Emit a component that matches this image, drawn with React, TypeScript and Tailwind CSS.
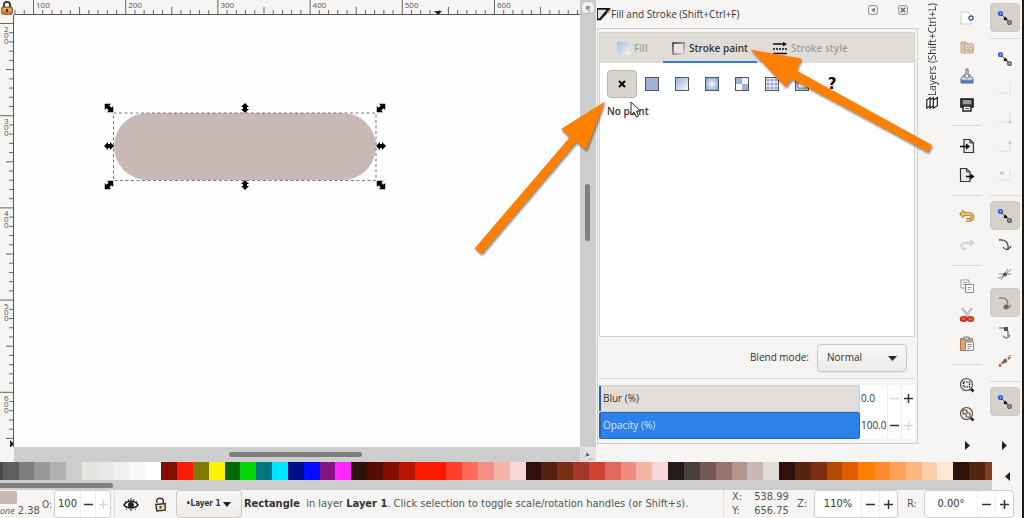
import type { ReactNode } from 'react'

const MINOR = 9.22

const swatches = [
  '#5f5f5f', '#7c7e80', '#989898', '#b0b0b0', '#cdcdcd', '#e6e5e2', '#e9e8e7', '#f1f0ef', '#f8f8f8', '#ffffff',
  '#850d00', '#f91c06', '#837908', '#fff200', '#006a00', '#06d70b', '#057782', '#00e5ff', '#000f85', '#000dff', '#851285', '#ff26ff',
  '#2e110a', '#560b06', '#850d00', '#b81303', '#f91a00', '#fb1a00', '#ff4029', '#ff6a5a', '#f58f85', '#f6b4aa', '#fad7da',
  '#2e110a', '#55200f', '#7c2e14', '#a6352b', '#d04332', '#e06a5e', '#f18d80', '#f4b5a5', '#fad7da',
  '#261c1d', '#4a3e3a', '#72584f', '#96736d', '#b0968f', '#c8b9b6', '#e0ddd8',
  '#2e110a', '#55260f', '#7f2d10', '#b34a00', '#e05f05', '#ff7f00', '#ff8a2a', '#ffa059', '#ffb580', '#ffceaa', '#ffe6d5',
  '#2e110a', '#55260f',
]

function Icon({ size = 16, children }: { size?: number; children: ReactNode }) {
  return (
    <svg width={size} height={size} viewBox="0 0 16 16" fill="none" aria-hidden className="shrink-0">
      {children}
    </svg>
  )
}

/* ---------- rulers and canvas ---------- */

function HorizontalRuler() {
  const ticks = Array.from({ length: 62 }, (_, i) => i - 2)
  return (
    <svg className="h-[15px] min-w-0 flex-1" aria-hidden>
      {ticks.map((i) => {
        const x = 19.5 + i * MINOR
        const top = i % 10 === 0 ? 0 : i % 5 === 0 ? 7 : 10
        return <line key={i} x1={x} x2={x} y1={top} y2={14} stroke="#666" />
      })}
      {[100, 200, 300, 400, 500, 600].map((n, k) => (
        <text key={n} x={22 + k * MINOR * 10} y={8} fill="#555" className="font-['Open_Sans',sans-serif] text-[8px]">
          {n}
        </text>
      ))}
      <path d="M420 11h8l-4 4z" fill="#222" />
      <line x1="0" x2="100%" y1="14.5" y2="14.5" stroke="#555" />
    </svg>
  )
}

function VerticalRuler() {
  const ticks = Array.from({ length: 47 }, (_, i) => i)
  return (
    <svg className="h-full w-[14px] shrink-0" aria-hidden>
      {ticks.map((i) => {
        const y = 8.5 + i * MINOR
        const left = i % 10 === 0 ? 0 : i % 5 === 0 ? 6 : 9
        return <line key={i} x1={left} x2={13} y1={y} y2={y} stroke="#666" />
      })}
      {[200, 300, 400, 500, 600].map((n, k) => (
        <text key={n} fill="#555" className="font-['Open_Sans',sans-serif] text-[8px]">
          {String(n).split('').map((c, j) => (
            <tspan key={j} x={4} y={17 + j * 6 + k * MINOR * 10}>{c}</tspan>
          ))}
        </text>
      ))}
      <path d="M10 425l4 4-4 4z" fill="#222" />
      <line x1="13.5" x2="13.5" y1="0" y2="100%" stroke="#555" />
    </svg>
  )
}

const handles = [
  [95, 93, 45], [231, 93, 90], [367, 93, -45],
  [95, 131, 0], [367, 131, 0],
  [95, 170, -45], [231, 170, 90], [367, 170, 45],
]

function Canvas() {
  return (
    <svg className="h-full min-w-0 flex-1 bg-[#fefefe]" role="img" aria-label="Rectangle">
      <rect x="100" y="98" width="262" height="67" rx="33.5" fill="#c8b9b6" />
      <rect x="99.5" y="98" width="262.5" height="67.5" stroke="#77778f" strokeDasharray="3 2.5" fill="none" />
      {handles.map(([x, y, r]) => (
        <path
          key={`${x}-${y}`}
          transform={`translate(${x} ${y}) rotate(${r})`}
          d={r % 90 === 0 ? 'M-5 0l4-4v2h2v-2l4 4-4 4v-2h-2v2z' : 'M-6 0l4.500-4.500v2.500h3v-2.500l4.500 4.500-4.500 4.500v-2.500h-3v2.500z'}
          fill="#000"
        />
      ))}
    </svg>
  )
}

function Editor() {
  return (
    <div className="flex min-w-0 flex-1">
      <div className="flex min-w-0 flex-1 flex-col">
        <div className="flex h-[15px] shrink-0">
          <button aria-label="Lock guides" className="flex w-[14px] shrink-0 items-end justify-center">
            <Icon size={14}>
              <path d="M4.500 7V4.500a3.500 3.500 0 0 1 7 0V7" stroke="#3a2b22" strokeWidth="2" />
              <rect x="2" y="7" width="12" height="8" rx="1" fill="#f0a637" stroke="#49331f" />
              <path d="M3 13h10" stroke="#dc6a35" strokeWidth="2" />
              <path d="M8 9v3.500" stroke="#3a1a10" strokeWidth="2" />
            </Icon>
          </button>
          <HorizontalRuler />
        </div>
        <div className="flex min-h-0 flex-1">
          <VerticalRuler />
          <Canvas />
        </div>
        <div className="ml-[14px] flex h-[15px] shrink-0 items-center bg-[#cdcdcd]">
          <div className="ml-[38%] h-[5px] w-[133px] rounded-full bg-[#7f7f7f]" />
        </div>
      </div>
      <div className="flex w-4 shrink-0 flex-col bg-[#cdcdcd]">
        <button aria-label="Page view" className="m-px flex h-[13px] items-center justify-center rounded-sm border border-[#bbb] bg-[#f1f0ee] font-['Open_Sans',sans-serif] text-[8px] text-[#777]">
          ¶
        </button>
        <div className="flex-1 pt-[169px]">
          <div className="ml-[5px] h-[57px] w-[5px] rounded-full bg-[#7f7f7f]" />
        </div>
        <button aria-label="Color managed view" className="flex h-[15px] items-center justify-center bg-[#e2e2e2]">
          <Icon size={14}>
            <path d="M2 1v13l12-1z" fill="#f5f2ec" stroke="#c5c5c5" />
            <path d="M3 6l4 3-4 5z" fill="#bcd6e8" />
            <path d="M6 5l4 3-4 2z" fill="#3e6171" />
            <path d="M9 10l4 3-6 1z" fill="#e8b7a5" />
          </Icon>
        </button>
      </div>
    </div>
  )
}

/* ---------- fill and stroke dialog ---------- */

function PaintSquare({ fill, children }: { fill: string; children?: ReactNode }) {
  return (
    <svg width="14" height="14" viewBox="0 0 14 14" aria-hidden>
      <rect x=".5" y=".5" width="13" height="13" fill={fill} stroke="#555" />
      {children}
    </svg>
  )
}

const paints: { name: string; icon: ReactNode }[] = [
  { name: 'Flat color', icon: <PaintSquare fill="#9bb2d4" /> },
  { name: 'Linear gradient', icon: <PaintSquare fill="url(#linear)" /> },
  { name: 'Radial gradient', icon: <PaintSquare fill="url(#radial)" /> },
  {
    name: 'Mesh gradient',
    icon: (
      <PaintSquare fill="#fff">
        <path d="M1 1h6v6H1zM7 7h6v6H7z" fill="#9bb2d4" />
        <path d="M7 1h6v6H7z" fill="#f1f4fa" />
      </PaintSquare>
    ),
  },
  {
    name: 'Pattern',
    icon: (
      <PaintSquare fill="#e8eef7">
        <circle cx="3" cy="3" r="1.6" fill="#8ea9d2" />
        <circle cx="7" cy="3" r="1.6" fill="#8ea9d2" />
        <circle cx="11" cy="3" r="1.6" fill="#8ea9d2" />
        <circle cx="3" cy="7" r="1.6" fill="#8ea9d2" />
        <circle cx="7" cy="7" r="1.6" fill="#8ea9d2" />
        <circle cx="11" cy="7" r="1.6" fill="#8ea9d2" />
        <circle cx="3" cy="11" r="1.6" fill="#8ea9d2" />
        <circle cx="7" cy="11" r="1.6" fill="#8ea9d2" />
        <circle cx="11" cy="11" r="1.6" fill="#8ea9d2" />
      </PaintSquare>
    ),
  },
  {
    name: 'Swatch',
    icon: (
      <PaintSquare fill="#b4c3dc">
        <path d="M3 1h9v10H3z" fill="#fff" stroke="#777" />
      </PaintSquare>
    ),
  },
]

function Dialog() {
  return (
    <section className="flex w-[322px] shrink-0 flex-col pl-px pb-[18px] text-[10px] text-[#333]">
      <header className="flex h-7 shrink-0 items-center">
        <Icon size={14}>
          <path d="M0 2h13L4 14H0z" fill="#e4e4e4" stroke="#111" strokeWidth="2" />
          <path d="M15 1L7 8l-5 6 6-3 7-8z" fill="#111" />
          <path d="M16 1l-5 5 2 1 3-4z" fill="#d98b4a" />
        </Icon>
        <h2>Fill and Stroke (Shift+Ctrl+F)</h2>
        <div className="mb-2 ml-auto mr-[10px] flex gap-[20px]">
          <button aria-label="Iconify">
            <Icon size={10}>
              <rect x="1" y="1" width="14" height="14" rx="2" stroke="#888" strokeWidth="1.500" />
              <path d="M11 4v8L5 8z" fill="#777" />
            </Icon>
          </button>
          <button aria-label="Close">
            <Icon size={10}>
              <rect x="1" y="1" width="14" height="14" rx="2" stroke="#888" strokeWidth="1.500" />
              <path d="M4.500 4.500l7 7m0-7l-7 7" stroke="#666" strokeWidth="2.500" />
            </Icon>
          </button>
        </div>
      </header>

      <div className="flex min-h-0 flex-1 flex-col border border-[#d2cec9] pt-[3px] pr-[2px] pb-1 pl-px">
        <div className="flex min-h-0 flex-1 flex-col border border-[#d5d1cd] bg-white">
          <div role="tablist" className="flex h-[30px] shrink-0 bg-[#e0ddd9] font-semibold text-[#a09d99]">
            <button role="tab" className="flex w-[63px] items-center gap-1 pl-[17px]">
              <svg width="13" height="13" aria-hidden><path d="M0 0h13v13H0z" fill="url(#linear)" opacity=".7" /></svg>
              Fill
            </button>
            <button role="tab" aria-selected className="flex w-[94px] items-center justify-center gap-1 whitespace-nowrap border-b-2 border-[#3b7dd0] pt-[2px] text-[#333]">
              <svg width="13" height="13" aria-hidden className="shrink-0">
                <rect x="1" y="1" width="11" height="11" fill="#e8e5e2" stroke="url(#edge)" strokeWidth="1.500" />
              </svg>
              Stroke paint
            </button>
            <button role="tab" className="flex items-center gap-1 whitespace-nowrap pl-[16px]">
              <svg width="14" height="13" aria-hidden>
                <path d="M0 2h11M0 11.500h14" stroke="#111" strokeWidth="1.500" />
                <path d="M10 0l4 2-4 2.500z" fill="#111" />
                <path d="M0 7h14" stroke="#111" strokeWidth="1.500" strokeDasharray="2 1" />
              </svg>
              Stroke style
            </button>
          </div>
          <div className="flex pt-[7px] pl-[7px]">
            <button aria-label="No paint" className="flex h-7 w-[30px] items-center justify-center rounded border border-[#b8b3ae] bg-[#d8d4d0]">
              <svg width="8" height="8" aria-hidden><path d="M1 1l6 6m0-6L1 7" stroke="#000" strokeWidth="2" /></svg>
            </button>
            {paints.map((p) => (
              <button key={p.name} aria-label={p.name} className="flex h-7 w-[30px] items-center justify-center">
                {p.icon}
              </button>
            ))}
            <button aria-label="Unset paint" className="h-7 w-[30px] font-['DejaVu_Sans',sans-serif] text-[15px] font-bold text-black">
              ?
            </button>
          </div>
          <p className="pt-[6px] pl-[7px] font-semibold">No paint</p>
        </div>

        <div className="flex h-[41px] shrink-0 items-center justify-end gap-2 pr-2">
          <label htmlFor="blend">Blend mode:</label>
          <div className="relative">
            <select id="blend" className="h-7 w-[90px] appearance-none rounded border border-[#cdc7c2] bg-linear-to-b from-[#f8f7f6] to-[#edebe9] pl-[9px] shadow-xs">
              <option>Normal</option>
            </select>
            <svg width="9" height="5" aria-hidden className="pointer-events-none absolute top-3 right-[10px]">
              <path d="M0 0h9L4.500 5z" fill="#2b2b2b" />
            </svg>
          </div>
        </div>
        <div className="mb-[6px] h-px shrink-0 bg-[#dcd9d5]" />
        <SliderRow id="blur" label="Blur (%)" value={0} text="0.0" />
        <SliderRow id="opacity" label="Opacity (%)" value={100} text="100.0" />
      </div>
    </section>
  )
}

function SliderRow({ id, label, value, text }: { id: string; label: string; value: number; text: string }) {
  const full = value === 100
  return (
    <div className="flex h-[27px] shrink-0">
      <div className="relative min-w-0 flex-1">
        <input
          id={id}
          type="range"
          defaultValue={value}
          className={`block h-full w-full appearance-none rounded-xs border border-l-2 border-l-[#1d62bd] [&::-webkit-slider-thumb]:w-0 [&::-webkit-slider-thumb]:appearance-none ${
            full ? 'border-[#2568bd] bg-[#2c82e8]' : 'border-[#d0ccc7] bg-[#e1deda]'
          }`}
        />
        <label htmlFor={id} className={`absolute inset-y-0 left-1 flex items-center ${full ? 'text-[#d3e7ff]' : ''}`}>
          {label}
        </label>
      </div>
      <input aria-label={`${label} value`} defaultValue={text} className="w-[27px] bg-white pl-px" />
      <button aria-label={`Decrease ${label}`} className="flex w-[14px] items-center justify-center border-l border-[#eee] bg-white">
        <Sign muted={!full} />
      </button>
      <button aria-label={`Increase ${label}`} className="flex w-[14px] items-center justify-center border-l border-[#eee] bg-white">
        <Sign plus muted={full} />
      </button>
    </div>
  )
}

function Sign({ plus, muted }: { plus?: boolean; muted?: boolean }) {
  return (
    <svg width="9" height="9" aria-hidden className="shrink-0">
      <path d={plus ? 'M0 4.500h9M4.500 0v9' : 'M0 4.500h9'} stroke={muted ? '#d8d6d4' : '#333'} strokeWidth="1.500" />
    </svg>
  )
}

function LayersTab() {
  return (
    <button className="flex w-[29px] shrink-0 flex-col items-center pt-[3px] text-[10px] text-[#333]">
      <span className="rotate-180 whitespace-nowrap [writing-mode:vertical-rl]">Layers (Shift+Ctrl+L)</span>
      <Icon size={13}>
        <path d="M1 5l4-3v10l-4 3zM5 5l4-3v10l-4 3zM9 5l5-3v10l-5 3z" stroke="#222" strokeWidth="1.500" fill="#fff" />
      </Icon>
    </button>
  )
}

/* ---------- toolbars ---------- */

const snapNodes = (
  <Icon>
    <path d="M4 4l8 8" stroke="#555" />
    <circle cx="3.500" cy="3.500" r="1.800" fill="#a9bdf5" stroke="#2e52d6" strokeWidth="1.500" />
    <path d="M8 6.500l2.500 2.500-1 1.500-3-1z" fill="#000" />
    <circle cx="12.500" cy="12.500" r="1.800" fill="#b5b5b5" stroke="#666" strokeWidth="1.500" />
  </Icon>
)

type Tool = { name: string; icon: ReactNode; active?: boolean } | null

const commands: Tool[] = [
  {
    name: 'New document',
    icon: (
      <Icon>
        <path d="M2 2h7l3 3v9H2z" fill="#fff" stroke="#ccc" />
        <circle cx="12" cy="8" r="2" fill="#fff" stroke="#3d689c" strokeWidth="1.500" />
      </Icon>
    ),
  },
  {
    name: 'Open',
    icon: (
      <Icon>
        <path d="M2 3h5l1 2h6v9H2z" fill="#dfc0a2" stroke="#c8a98e" />
        <path d="M6 5h8v6H6z" fill="#f7eee7" stroke="#b89c84" />
        <path d="M8 7h4v2H8z" stroke="#b89c84" />
      </Icon>
    ),
  },
  {
    name: 'Save',
    icon: (
      <Icon>
        <path d="M3 9h10l1 2v4H2v-4z" fill="#4d82bf" stroke="#3e6ca3" />
        <path d="M3 9h10l1 3H2z" fill="#e4e9ee" stroke="#7a93ad" />
        <path d="M7 1h2v6h2.500L8 10.500 4.500 7H7z" fill="#f5f5f5" stroke="#57606a" />
      </Icon>
    ),
  },
  {
    name: 'Print',
    icon: (
      <Icon>
        <path d="M2 2h12v8H2z" fill="#555" stroke="#111" strokeWidth="1.500" />
        <path d="M4 4h8M4 6h8" stroke="#ddd" />
        <path d="M4 9h8v5H4z" fill="#fff" stroke="#222" strokeWidth="1.500" />
        <path d="M6 11.500h4" stroke="#555" />
      </Icon>
    ),
  },
  null,
  {
    name: 'Import',
    icon: (
      <Icon>
        <path d="M5 1.500h6l3.500 3.500v9.500H5z" fill="#e8e8e8" stroke="#333" strokeWidth="1.200" />
        <path d="M11 1.500V5h3.500" stroke="#333" />
        <path d="M1 8.500h7" stroke="#000" strokeWidth="1.500" />
        <path d="M7 5.500l4 3-4 3z" fill="#000" />
      </Icon>
    ),
  },
  {
    name: 'Export',
    icon: (
      <Icon>
        <path d="M1.500 1.500h6L11 5v9.500H1.500z" fill="#e8e8e8" stroke="#333" strokeWidth="1.200" />
        <path d="M7.500 1.500V5H11" stroke="#333" />
        <path d="M7 9.500h6" stroke="#000" strokeWidth="1.500" />
        <path d="M11.500 6.500l4 3-4 3z" fill="#000" />
      </Icon>
    ),
  },
  null,
  {
    name: 'Undo',
    icon: (
      <Icon>
        <path d="M5 3L2.500 6 5 9M3 6h7c5 0 5 6-1 6H7" stroke="#a0703a" strokeWidth="3.500" />
        <path d="M5 3L2.500 6 5 9M3 6h7c5 0 5 6-1 6H7" stroke="#efc957" strokeWidth="1.800" />
      </Icon>
    ),
  },
  {
    name: 'Redo',
    icon: (
      <Icon>
        <path d="M11 3l3 3-3 3M13 6H6c-5 0-5 6 1 6" stroke="#d7d7d5" strokeWidth="2.500" />
      </Icon>
    ),
  },
  null,
  {
    name: 'Copy',
    icon: (
      <Icon>
        <path d="M2 2h8v8H2z" fill="#fff" stroke="#999" />
        <path d="M4 4.500h4M4 6.500h3" stroke="#999" />
        <path d="M6.500 6.500h8v8h-8z" fill="#fff" stroke="#888" />
        <path d="M8.500 9.500h4M8.500 11.500h3" stroke="#999" />
      </Icon>
    ),
  },
  {
    name: 'Cut',
    icon: (
      <Icon>
        <path d="M3 1l7 9M13 1L6 10" stroke="#999" strokeWidth="2" />
        <path d="M3 1l7 9M13 1L6 10" stroke="#e8e8e8" strokeWidth=".8" />
        <ellipse cx="4.500" cy="12" rx="3" ry="2.200" fill="#e2604f" stroke="#cc2b20" strokeWidth="1.500" />
        <ellipse cx="11.500" cy="12" rx="3" ry="2.200" fill="#e2604f" stroke="#cc2b20" strokeWidth="1.500" />
      </Icon>
    ),
  },
  {
    name: 'Paste',
    icon: (
      <Icon>
        <path d="M1.500 2.500h12v12h-12z" fill="#dca46c" stroke="#a87a50" />
        <path d="M5 1h5v3H5z" fill="#ddd" stroke="#777" />
        <path d="M6.500 6h8v8.500h-8z" fill="#fff" stroke="#888" />
        <path d="M8.500 8.500h4M8.500 10.500h4M8.500 12.500h3" stroke="#888" />
      </Icon>
    ),
  },
  null,
  {
    name: 'Zoom selection',
    icon: (
      <Icon>
        <path d="M10.500 10.500l4 4" stroke="#222" strokeWidth="2.500" />
        <circle cx="7.500" cy="7.500" r="6" fill="#e6eaec" stroke="#555" strokeWidth="1.200" />
        <path d="M4.500 5h6v5h-6z" stroke="#111" strokeWidth="1.200" strokeDasharray="1.500 1" />
      </Icon>
    ),
  },
  {
    name: 'Zoom drawing',
    icon: (
      <Icon>
        <path d="M10.500 10.500l4 4" stroke="#222" strokeWidth="2.500" />
        <circle cx="7.500" cy="7.500" r="6" fill="#e6eaec" stroke="#555" strokeWidth="1.200" />
        <path d="M4 4h4v4H4z" fill="#e9dcd4" stroke="#5e4433" />
        <path d="M7 7h4v4H7z" fill="#f0e0d0" stroke="#7b4e35" />
      </Icon>
    ),
  },
]

const dotted = { stroke: '#dddbd9', strokeWidth: 1.5, strokeDasharray: '1.500 1' }

const snaps: Tool[] = [
  { name: 'Enable snapping', icon: snapNodes, active: true },
  null,
  { name: 'Snap bounding boxes', icon: snapNodes },
  { name: 'Snap to edges', icon: <Icon><path d="M2 13h11V3" {...dotted} /></Icon> },
  {
    name: 'Snap to corners',
    icon: <Icon><path d="M2 13h11V3" {...dotted} /><path d="M13 11l2 2-2 2-2-2z" fill="#cfccca" /></Icon>,
  },
  {
    name: 'Snap edge midpoints',
    icon: <Icon><path d="M2 13h11V3" {...dotted} /><path d="M13 2l2 4h-4z" fill="#cfccca" /></Icon>,
  },
  {
    name: 'Snap centers',
    icon: <Icon><path d="M2 13h11V3" {...dotted} /><circle cx="5" cy="6" r="2" fill="#cfccca" /></Icon>,
  },
  null,
  { name: 'Snap nodes', icon: snapNodes, active: true },
  {
    name: 'Snap to paths',
    icon: <Icon><path d="M2 3c6-1 10 2 9 10M6 10c2 3 5 4 8-1" stroke="#3d5048" strokeWidth="1.300" /></Icon>,
  },
  {
    name: 'Snap path intersections',
    icon: <Icon><path d="M1 12c5-1 9-4 13-9M2 8h12M4 14l7-11" stroke="#888" /><circle cx="8" cy="8.500" r="2" fill="#4d5a54" /></Icon>,
  },
  {
    name: 'Snap cusp nodes',
    active: true,
    icon: <Icon><path d="M2 3c7-1 10 2 8 9M7 12c3 2 5 1 7-2" stroke="#888" strokeWidth="1.500" /><circle cx="9" cy="12" r="2.500" fill="#666" /></Icon>,
  },
  {
    name: 'Snap smooth nodes',
    icon: <Icon><path d="M2 4h7c3 3 2 5 2 9M6 12c3 3 5 2 7-1" stroke="#888" strokeWidth="1.500" /><path d="M7 3h4v4H7z" fill="#555" /></Icon>,
  },
  {
    name: 'Snap line midpoints',
    icon: <Icon><path d="M3 14c0-5 3-3 5-6s5-1 5-6" stroke="#c07050" strokeWidth="2.500" strokeDasharray="3 1" /><circle cx="8" cy="8" r="2" fill="#666" /></Icon>,
  },
  null,
  { name: 'Snap others', icon: snapNodes, active: true },
]

function Toolbar({ label, tools, className }: { label: string; tools: Tool[]; className: string }) {
  return (
    <div role="toolbar" aria-label={label} className={`flex shrink-0 flex-col items-center pt-[3px] ${className}`}>
      {tools.map((tool, i) =>
        tool ? (
          <button
            key={i}
            aria-label={tool.name}
            className={`flex h-[29px] w-[30px] shrink-0 items-center justify-center rounded ${tool.active ? 'border border-[#cbc7c3] bg-[#d5d1cd]' : ''}`}
          >
            {tool.icon}
          </button>
        ) : (
          <div key={i} className="flex h-3 w-[30px] shrink-0 items-center">
            <div className="h-px w-full bg-[#dbd8d5]" />
          </div>
        ),
      )}
      <button aria-label={`More ${label}`} className="mt-auto mb-[12px]">
        <svg width="5" height="9" aria-hidden><path d="M0 0l5 4.500L0 9z" fill="#222" /></svg>
      </button>
    </div>
  )
}

/* ---------- palette and status bar ---------- */

function Palette() {
  return (
    <div className="flex shrink-0">
      <div className="min-w-0 flex-1">
        <div className="flex h-[18px]">
          <div className="flex-[0.17] bg-[#484848]" />
          {swatches.map((color, i) => (
            <div key={i} className="flex-1" style={{ backgroundColor: color }} />
          ))}
          <div className="flex-[0.42] bg-[#7c4026]" />
        </div>
        <div className="flex h-[10px] items-center bg-[#cdcdcd]">
          <div className="h-[5px] w-[113px] rounded-r-full bg-[#7f7f7f]" />
        </div>
      </div>
      <button aria-label="Palette menu" className="flex w-[30px] items-center justify-center">
        <svg width="5" height="9" aria-hidden><path d="M5 0v9L0 4.500z" fill="#222" /></svg>
      </button>
    </div>
  )
}

function Spin({ id, value, compact, className }: { id: string; value: string; compact?: boolean; className: string }) {
  const button = compact ? 'w-[15px]' : 'w-[18px]'
  return (
    <div className={`flex h-7 shrink-0 rounded border border-[#d0ccc8] bg-white ${className}`}>
      <input id={id} defaultValue={value} className="min-w-0 flex-1 text-center text-[#333]" />
      <button aria-label={`Decrease ${id}`} className={`flex items-center justify-center border-l border-[#eee] ${button}`}><Sign /></button>
      <button aria-label={`Increase ${id}`} className={`flex items-center justify-center border-l border-[#eee] ${button}`}><Sign plus muted={compact} /></button>
    </div>
  )
}

function StatusBar() {
  return (
    <footer className="flex h-7 shrink-0 items-center overflow-hidden font-['DejaVu_Sans_Condensed','DejaVu_Sans',sans-serif] text-[11px] whitespace-nowrap text-[#555]">
      <div className="flex h-full w-[42px] shrink-0 flex-col">
        <div className="mt-px h-[13px] w-[17px] shrink-0 rounded-r-xs bg-[#c9b8b5]" />
        <div className="flex gap-[3px] leading-[14px]">
          <em className="font-['Open_Sans',sans-serif] text-[9px] leading-[14px]">one</em>
          <span>2.38</span>
        </div>
      </div>
      <label htmlFor="opacity-value" className="w-3 shrink-0 text-[10px]">O:</label>
      <Spin id="opacity-value" value="100" compact className="w-[57px]" />
      <div className="ml-[3px] h-full w-px shrink-0 bg-[#dfdcd9]" />
      <button aria-label="Toggle layer visibility" className="ml-2 shrink-0">
        <Icon>
          <path d="M1 9c3-5 11-5 14 0-3 4-11 4-14 0z" fill="#fff" stroke="#222" strokeWidth="1.500" />
          <circle cx="8" cy="9" r="3" fill="#222" />
          <path d="M2 5l2 2M5 3l1 2M8 2v3M11 3l-1 2M14 5l-2 2M4 13l-1 1M8 13v2M12 13l1 1" stroke="#333" />
        </Icon>
      </button>
      <button aria-label="Toggle layer lock" className="ml-[14px] shrink-0">
        <Icon size={15}>
          <path d="M4 6V4c0-4 7-3 7 0v4" stroke="#333" strokeWidth="1.500" />
          <path d="M3 8l10-1v7l-9 1z" fill="#f0d6b5" stroke="#333" strokeWidth="1.500" />
          <path d="M8 9.500v3" stroke="#5b3a23" strokeWidth="2" />
        </Icon>
      </button>
      <div className="relative ml-2 shrink-0">
        <select aria-label="Current layer" className="h-7 w-[66px] appearance-none rounded border border-[#cdc7c2] bg-linear-to-b from-[#f8f7f6] to-[#eeecea] pl-[9px] text-[8px] font-bold text-[#333]">
          <option>•Layer 1</option>
        </select>
        <svg width="8" height="5" aria-hidden className="pointer-events-none absolute top-3 right-[11px]">
          <path d="M0 0h8L4 5z" fill="#222" />
        </svg>
      </div>
      <p className="min-w-0 flex-1 overflow-hidden pl-[2px]">
        <b className="text-[#333]">Rectangle</b>&nbsp; in layer <b className="text-[#333]">Layer 1</b>. Click selection to toggle scale/rotation handles (or Shift+s).
      </p>
      <div className="flex h-full w-[74px] shrink-0 gap-[12px] border-l border-[#dfdcd9] pl-[8px] leading-[14px]">
        <div>X:<br />Y:</div>
        <div>538.99<br />656.75</div>
      </div>
      <label htmlFor="zoom" className="w-[17px] shrink-0">Z:</label>
      <Spin id="zoom" value="110%" className="w-[84px]" />
      <label htmlFor="rotation" className="w-[26px] shrink-0 pl-[9px]">R:</label>
      <Spin id="rotation" value="0.00°" className="mr-[8px] w-[90px]" />
    </footer>
  )
}

/* ---------- pointer and callout arrows ---------- */

function Callouts() {
  return (
    <svg className="pointer-events-none absolute inset-0 h-full w-full overflow-hidden" aria-hidden>
      <defs>
        <linearGradient id="linear" x1="0" y1="0" x2="1" y2="1">
          <stop offset="0" stopColor="#8faed8" />
          <stop offset="1" stopColor="#fff" />
        </linearGradient>
        <radialGradient id="radial">
          <stop offset="0" stopColor="#fff" />
          <stop offset="1" stopColor="#8faed8" />
        </radialGradient>
        <linearGradient id="edge" x1="0" y1="0" x2="1" y2="1">
          <stop offset="0" stopColor="#333" />
          <stop offset="1" stopColor="#ccc" />
        </linearGradient>
      </defs>
      <path d="M631 102v13l3-3 2.500 5 2-1-2-5h4z" fill="#fff" stroke="#333" />
      <g fill="#ff7f00" className="drop-shadow-[1px_2px_1px_rgba(0,0,0,0.45)]">
        <path d="M605 101.500L586 150l-9.500-8L481.500 254l-7-5.500L569.500 137.500l-8.500-8.500z" />
        <path d="M750.500 49.500L801.500 58.500l-5 12L932 145l-4 7L792 79l-6.500 8z" />
      </g>
    </svg>
  )
}

export default function App() {
  return (
    <div className="relative flex h-screen w-full flex-col overflow-hidden border-r-2 border-[#1a1a1a] bg-[#f6f5f3] font-['Open_Sans','Noto_Sans',sans-serif]">
      <main className="flex min-h-0 flex-1">
        <Editor />
        <Dialog />
        <LayersTab />
        <Toolbar label="Commands" tools={commands} className="w-10" />
        <Toolbar label="Snap controls" tools={snaps} className="w-[35px]" />
      </main>
      <Palette />
      <StatusBar />
      <Callouts />
    </div>
  )
}
